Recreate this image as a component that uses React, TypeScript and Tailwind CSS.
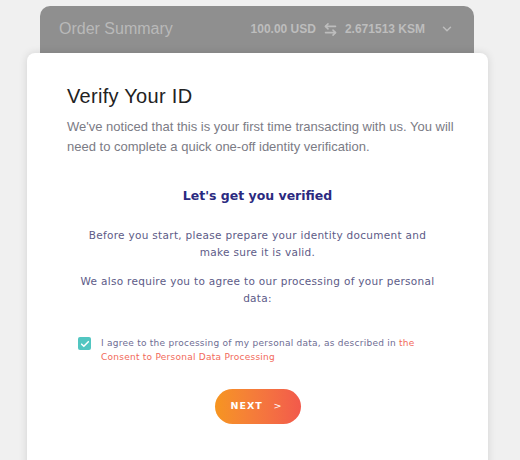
import { ChevronDown, ArrowLeftRight } from 'lucide-react';

export default function App() {
  return (
    <div className="min-h-[460px] w-[520px] overflow-hidden bg-[#f0f0f0] pt-[6px] font-['Liberation_Sans',Arial,sans-serif]">
      {/* Order summary bar */}
      <div className="mx-[40px] w-[434px] h-[60px] rounded-t-[10px] bg-[#8f8f8f] flex items-start pt-[13px] pl-[19px] pr-[20px]">
        <span className="text-[16px] text-[#b9b9b9] leading-[20px]">Order Summary</span>
        <div className="ml-auto flex items-center text-[12px] font-bold text-[#bdbdbd] leading-[20px]">
          <span>100.00 USD</span>
          <ArrowLeftRight className="mx-[7px] w-[15px] h-[15px]" strokeWidth={2.5} />
          <span>2.671513 KSM</span>
          <ChevronDown className="ml-[15px] w-[14px] h-[14px]" strokeWidth={2.5} />
        </div>
      </div>

      {/* Card */}
      <div className="-mt-[13px] mx-[27px] w-[461px] h-[420px] rounded-[8px] bg-white shadow-[0_0_8px_rgba(0,0,0,0.12)] px-[40px] pt-[30px]">
        <h1 className="text-[20px] text-[#222] leading-[26px] tracking-[0.3px]">Verify Your ID</h1>
        <p className="mt-[8px] -mr-[10px] text-[13px] leading-[20px] text-[#7b7b85]">
          We've noticed that this is your first time transacting with us. You will need to complete a quick one-off identity verification.
        </p>

        <div className="font-['DejaVu_Sans',sans-serif] text-center">
          <h2 className="mt-[30px] text-[12.5px] font-bold text-[#2b2a80] leading-[18px]">Let's get you verified</h2>
          <p className="mt-[22px] px-[8px] text-[10.5px] tracking-[0.3px] leading-[17px] text-[#5d5b87]">
            Before you start, please prepare your identity document and make sure it is valid.
          </p>
          <p className="mt-[12px] px-[8px] text-[10.5px] tracking-[0.3px] leading-[17px] text-[#5d5b87]">
            We also require you to agree to our processing of your personal data:
          </p>

          <label className="mt-[29px] flex items-start text-left pl-[11px] pr-[26px]">
            <span className="mt-[1px] shrink-0 w-[13px] h-[13px] rounded-[2px] bg-[#52c6c1] flex items-center justify-center">
              <svg viewBox="0 0 12 12" className="w-[10px] h-[10px]">
                <path d="M2 6.2l2.6 2.6L10 3.2" fill="none" stroke="white" strokeWidth="1.8" strokeLinecap="round" strokeLinejoin="round" />
              </svg>
            </span>
            <span className="ml-[10px] text-[9px] tracking-[0.25px] leading-[14px] text-[#6e6c93]">
              I agree to the processing of my personal data, as described in{' '}
              <span className="text-[#f26a5a]">the Consent to Personal Data Processing</span>
            </span>
          </label>

          <div className="mt-[25px] flex justify-center">
            <button className="w-[86px] h-[35px] rounded-full bg-gradient-to-r from-[#f6951f] to-[#f2594b] text-white text-[9.5px] font-bold tracking-[1px] flex items-center pl-[16px] pr-[18px]">
              <span>NEXT</span>
              <span className="ml-auto font-normal">&gt;</span>
            </button>
          </div>
        </div>
      </div>
    </div>
  );
}
